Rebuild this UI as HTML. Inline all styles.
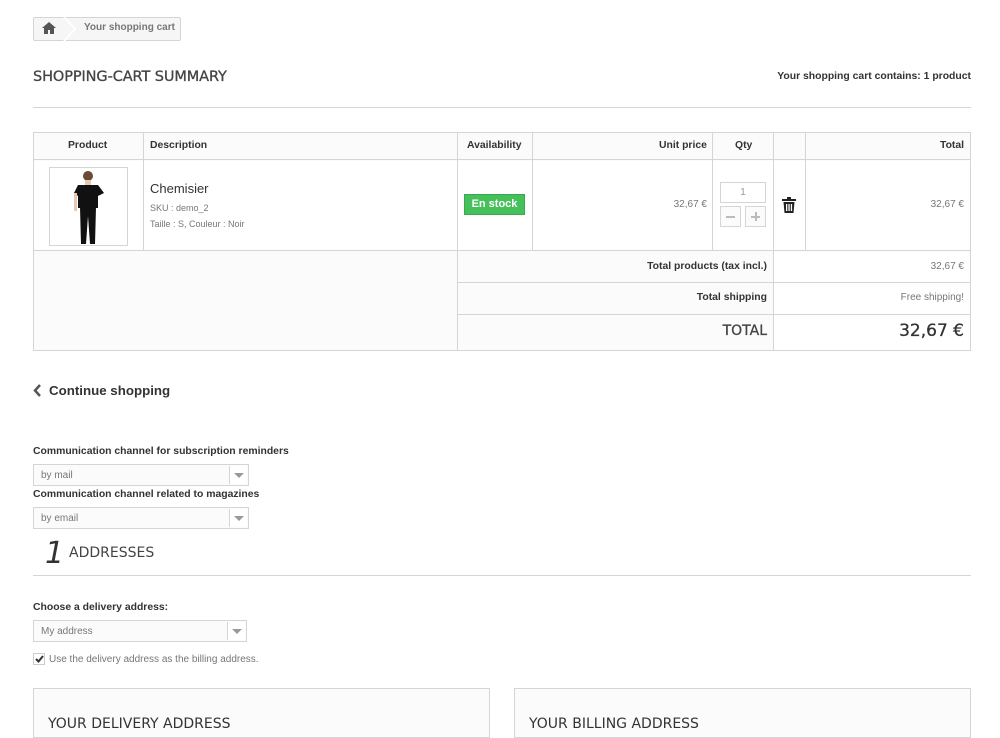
<!DOCTYPE html>
<html><head><meta charset="utf-8"><style>
*{margin:0;padding:0;box-sizing:border-box}
body{width:1000px;height:725px;overflow:hidden;background:#fff;font-family:"Liberation Sans",sans-serif;color:#333;position:relative}
.a{position:absolute}
.b{font-weight:bold}
.l{font-size:10.4px}
.cell{position:absolute;border:1px solid #d6d4d4}
.sel{position:absolute;height:22px;border:1px solid #d6d4d4;background:#fbfbfb;font-size:10px;color:#777;padding:5px 7px}
.sel i{position:absolute;right:1px;top:1px;width:18px;height:18px;border-left:1px solid #d6d4d4;background:#fff}
.sel i:after{content:"";position:absolute;left:4px;top:7px;border:5px solid transparent;border-top:5px solid #999;border-bottom:0}
</style></head><body>
<div class="a" style="left:33px;top:17px;width:148px;height:24px;border:1px solid #d6d4d4;background:#f6f6f6;border-radius:2px"></div>
<svg class="a" style="left:42px;top:22px" width="14" height="12" viewBox="0 0 14 12"><path d="M7 0L0 6h2v6h4V8h2v4h4V6h2z" fill="#555"/></svg>
<svg class="a" style="left:63px;top:17px" width="14" height="24"><path d="M1 0l11 12L1 24" fill="none" stroke="#fff" stroke-width="2"/></svg>
<div class="a b" style="left:84px;top:22px;font-size:10px;color:#777">Your shopping cart</div>
<div class="a" style="left:33px;top:69px;font-size:14.5px;color:#444;font-family:'DejaVu Sans',sans-serif;letter-spacing:-0.1px;-webkit-text-stroke:0.3px #444">SHOPPING-CART SUMMARY</div>
<div class="a b l" style="right:29px;top:71px">Your shopping cart contains: 1 product</div>
<div class="a" style="left:33px;top:107px;width:938px;height:1px;background:#d6d4d4"></div>

<div class="cell" style="left:33px;top:132px;width:938px;height:219px;background:#fbfbfb"></div>
<div class="a" style="left:34px;top:133px;width:936px;height:27px;background:#fbfbfb;border-bottom:1px solid #d6d4d4"></div>
<div class="a" style="left:34px;top:161px;width:936px;height:90px;background:#fff;border-bottom:1px solid #d6d4d4"></div>
<div class="a" style="left:143px;top:133px;width:1px;height:118px;background:#d6d4d4"></div>
<div class="a" style="left:457px;top:133px;width:1px;height:218px;background:#d6d4d4"></div>
<div class="a" style="left:532px;top:133px;width:1px;height:118px;background:#d6d4d4"></div>
<div class="a" style="left:712px;top:133px;width:1px;height:118px;background:#d6d4d4"></div>
<div class="a" style="left:773px;top:133px;width:1px;height:218px;background:#d6d4d4"></div>
<div class="a" style="left:805px;top:133px;width:1px;height:118px;background:#d6d4d4"></div>
<div class="a" style="left:774px;top:252px;width:196px;height:62px;background:#fff"></div>
<div class="a" style="left:774px;top:315px;width:196px;height:35px;background:#fff"></div>
<div class="a" style="left:458px;top:282px;width:512px;height:1px;background:#d6d4d4"></div>
<div class="a" style="left:458px;top:314px;width:512px;height:1px;background:#d6d4d4"></div>

<div class="a b l" style="left:68px;top:140px">Product</div>
<div class="a b l" style="left:150px;top:140px">Description</div>
<div class="a b l" style="left:467px;top:140px">Availability</div>
<div class="a b l" style="left:659px;top:140px">Unit price</div>
<div class="a b l" style="left:735px;top:140px">Qty</div>
<div class="a b l" style="left:940px;top:140px">Total</div>

<div class="a" style="left:49px;top:167px;width:79px;height:79px;border:1px solid #d6d4d4;background:#fff"></div>
<svg class="a" style="left:68px;top:169px" width="40" height="76" viewBox="0 0 40 76"><circle cx="20" cy="7" r="5" fill="#6b4a36"/><rect x="17" y="11" width="6" height="5" fill="#e8c8b0"/><path d="M10 16h20l6 8-6 3v12H10V27l-4-3z" fill="#111"/><path d="M12 38h16l-1 37h-5l-2-28-2 28h-5z" fill="#111"/><rect x="6" y="24" width="3" height="18" fill="#e8c8b0"/></svg>
<div class="a" style="left:150px;top:181px;font-size:13px;color:#333">Chemisier</div>
<div class="a" style="left:150px;top:203px;font-size:9px;color:#777">SKU : demo_2</div>
<div class="a" style="left:150px;top:219px;font-size:9px;color:#777">Taille : S, Couleur : Noir</div>
<div class="a b" style="left:464px;top:194px;width:61px;height:21px;background:#46c05a;border:1px solid #3aa84e;color:#fff;font-size:11px;text-align:center;line-height:19px">En stock</div>
<div class="a" style="right:293px;top:199px;font-size:10px;color:#777">32,67 €</div>
<div class="a" style="left:720px;top:182px;width:46px;height:21px;border:1px solid #d6d4d4;font-size:10px;color:#999;text-align:center;line-height:19px">1</div>
<div class="a" style="left:720px;top:206px;width:21px;height:21px;border:1px solid #d6d4d4;background:#fbfbfb"><div class="a" style="left:5px;top:9px;width:9px;height:2px;background:#bbb"></div></div>
<div class="a" style="left:745px;top:206px;width:21px;height:21px;border:1px solid #d6d4d4;background:#fbfbfb"><div class="a" style="left:5px;top:9px;width:9px;height:2px;background:#bbb"></div><div class="a" style="left:9px;top:5px;width:2px;height:9px;background:#bbb"></div></div>
<svg class="a" style="left:782px;top:197px" width="14" height="16" viewBox="0 0 14 16"><rect x="0" y="2" width="14" height="2" fill="#222"/><rect x="5" y="0" width="4" height="2" fill="#222"/><path d="M1.5 5h11l-1 11h-9z" fill="#222"/><rect x="4" y="7" width="1.3" height="7" fill="#fff"/><rect x="6.4" y="7" width="1.3" height="7" fill="#fff"/><rect x="8.8" y="7" width="1.3" height="7" fill="#fff"/></svg>
<div class="a" style="right:36px;top:199px;font-size:10px;color:#777">32,67 €</div>

<div class="a b l" style="right:233px;top:261px">Total products (tax incl.)</div>
<div class="a" style="right:36px;top:261px;font-size:10px;color:#777">32,67 €</div>
<div class="a b l" style="right:233px;top:292px">Total shipping</div>
<div class="a" style="right:36px;top:292px;font-size:10px;color:#777">Free shipping!</div>
<div class="a" style="right:233px;top:323px;font-size:14px;color:#444;font-family:'DejaVu Sans',sans-serif;-webkit-text-stroke:0.3px #444">TOTAL</div>
<div class="a" style="right:36px;top:321px;font-size:17px;color:#333;font-family:'DejaVu Sans',sans-serif;-webkit-text-stroke:0.3px #333">32,67 €</div>

<svg class="a" style="left:33px;top:384px" width="9" height="13"><path d="M7 1L2 6.5 7 12" fill="none" stroke="#555" stroke-width="2.5"/></svg>
<div class="a b" style="left:49px;top:383px;font-size:13.3px">Continue shopping</div>

<div class="a b l" style="left:33px;top:446px">Communication channel for subscription reminders</div>
<div class="sel" style="left:33px;top:464px;width:216px">by mail<i></i></div>
<div class="a b l" style="left:33px;top:489px">Communication channel related to magazines</div>
<div class="sel" style="left:33px;top:507px;width:216px">by email<i></i></div>
<div class="a" style="left:45px;top:536px;font-size:30px;font-style:italic;color:#333;font-family:'DejaVu Sans',sans-serif">1</div>
<div class="a" style="left:69px;top:545px;font-size:14px;color:#444;font-family:'DejaVu Sans',sans-serif">ADDRESSES</div>
<div class="a" style="left:33px;top:575px;width:938px;height:1px;background:#d6d4d4"></div>
<div class="a b l" style="left:33px;top:602px">Choose a delivery address:</div>
<div class="sel" style="left:33px;top:620px;width:214px">My address<i></i></div>
<div class="a" style="left:33px;top:653px;width:12px;height:12px;border:1px solid #ccc;background:#fff"><svg class="a" style="left:1px;top:1px" width="9" height="8"><path d="M1 4l2.5 2.5L8 1" fill="none" stroke="#333" stroke-width="2"/></svg></div>
<div class="a" style="left:49px;top:654px;font-size:10px;color:#777">Use the delivery address as the billing address.</div>
<div class="a" style="left:33px;top:688px;width:457px;height:50px;border:1px solid #d6d4d4;background:#fbfbfb"></div>
<div class="a" style="left:514px;top:688px;width:457px;height:50px;border:1px solid #d6d4d4;background:#fbfbfb"></div>
<div class="a" style="left:48px;top:716px;font-size:14px;color:#333;font-family:'DejaVu Sans',sans-serif">YOUR DELIVERY ADDRESS</div>
<div class="a" style="left:529px;top:716px;font-size:14px;color:#333;font-family:'DejaVu Sans',sans-serif">YOUR BILLING ADDRESS</div>
</body></html>
